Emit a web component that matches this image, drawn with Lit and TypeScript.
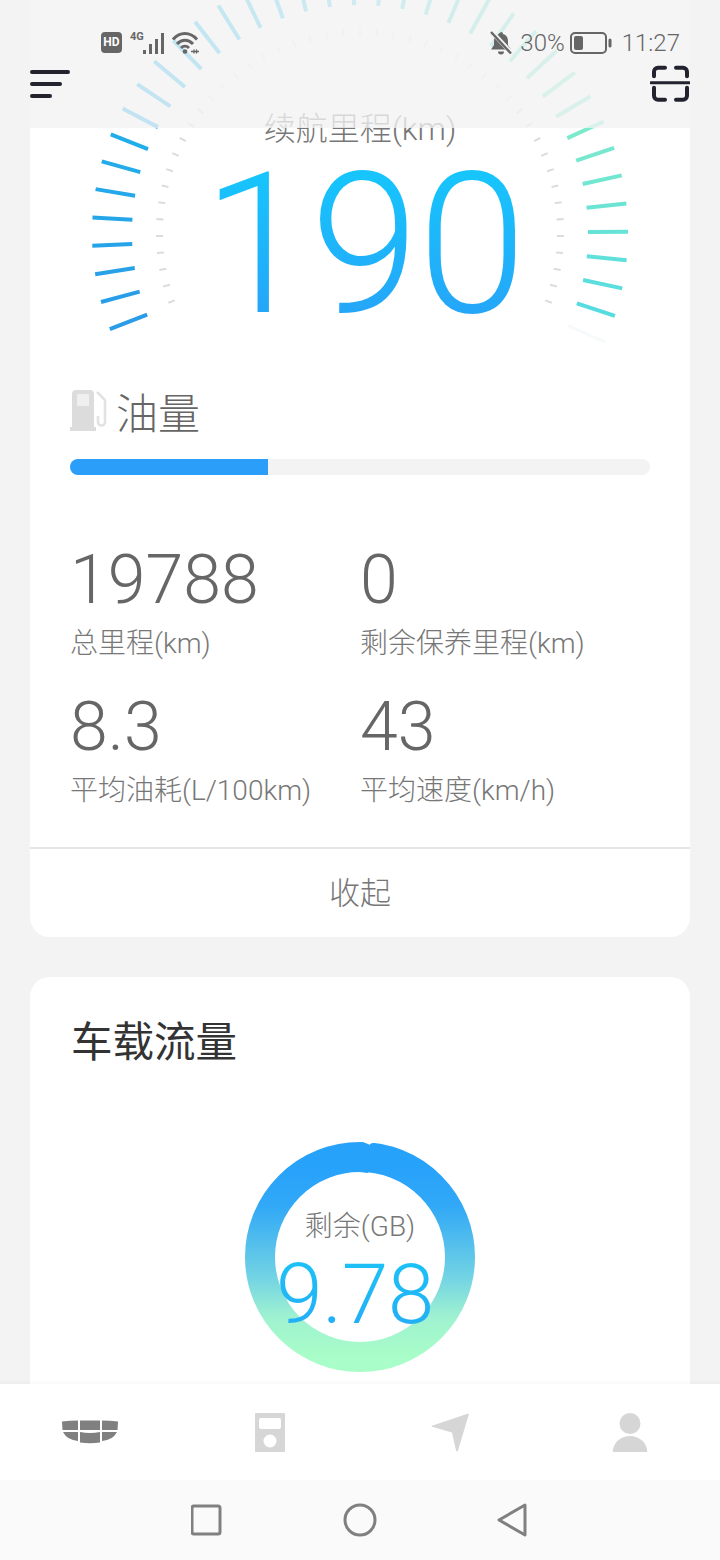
import { LitElement, html, css, svg } from 'lit';
import { customElement, property } from 'lit/decorators.js';

const CX = 330;
const CY = 233;

// clockwise from bottom-left of the gauge to bottom-right
const STOPS: [number, number[]][] = [
  [0, [42, 156, 232]],
  [0.32, [28, 184, 236]],
  [0.5, [80, 208, 226]],
  [0.76, [134, 237, 198]],
  [1, [85, 220, 224]],
];

function tickColor(t: number) {
  for (let i = 1; i < STOPS.length; i++) {
    if (t <= STOPS[i][0]) {
      const [t0, a] = STOPS[i - 1];
      const [t1, b] = STOPS[i];
      const k = (t - t0) / (t1 - t0);
      return `rgb(${a.map((v, j) => Math.round(v + (b[j] - v) * k)).join(',')})`;
    }
  }
  return 'rgb(85,220,224)';
}

function polar(r: number, deg: number) {
  const a = (deg * Math.PI) / 180;
  return [CX + r * Math.cos(a), CY - r * Math.sin(a)];
}

function tick(r0: number, r1: number, deg: number, color: string, w: number) {
  const [x1, y1] = polar(r0, deg);
  const [x2, y2] = polar(r1, deg);
  return svg`<line x1=${x1} y1=${y1} x2=${x2} y2=${y2} stroke=${color} stroke-width=${w} />`;
}

@customElement('range-gauge')
export class RangeGauge extends LitElement {
  @property({ type: String }) label = '';
  @property({ type: String }) value = '';

  static styles = css`
    :host {
      display: grid;
      height: 360px;
    }

    .dial,
    .readout {
      grid-area: 1 / 1;
    }

    .dial {
      width: 660px;
      height: 360px;
      overflow: visible;
    }

    .readout {
      display: flex;
      flex-direction: column;
      align-items: center;
      padding-top: 109px;
    }

    .label {
      font: 300 32px/40px Roboto, 'Noto Sans CJK SC', sans-serif;
      color: #777;
    }

    .value {
      padding-left: 8px;
      font: 300 196px/192px Roboto, sans-serif;
      letter-spacing: -1px;
      background: linear-gradient(180deg, #17c4fc 15%, #25a6f8 85%);
      -webkit-background-clip: text;
      background-clip: text;
      color: transparent;
    }
  `;

  render() {
    const outer = [tick(228, 268, -24, '#f6fafa', 3)];
    for (let k = 0; k <= 36; k++) {
      const deg = -18 + (219 / 36) * k;
      outer.push(tick(228, 268, deg, tickColor(1 - k / 36), 4));
    }
    const inner = [];
    for (let k = 0; k <= 46; k++) {
      const deg = -20 + (220 / 46) * k;
      // the upper part of the scale fades out under the header
      const color = deg > 38 && deg < 142 ? '#ececec' : '#dcdcdc';
      inner.push(tick(197, 204, deg, color, 2));
    }
    return html`
      <svg class="dial" viewBox="0 0 660 360">${inner}${outer}</svg>
      <div class="readout">
        <div class="label">${this.label}</div>
        <div class="value">${this.value}</div>
      </div>
    `;
  }
}

@customElement('data-ring')
export class DataRing extends LitElement {
  static styles = css`
    :host {
      display: grid;
      width: 230px;
      height: 230px;
      justify-items: center;
    }

    svg,
    .text {
      grid-area: 1 / 1;
    }

    svg {
      width: 230px;
      height: 230px;
    }

    .text {
      display: flex;
      flex-direction: column;
      align-items: center;
      padding-top: 67px;
    }

    .label {
      font: 300 28px/36px Roboto, 'Noto Sans CJK SC', sans-serif;
      color: #777;
    }

    .value {
      margin: 8px 10px 0 0;
      font: 300 84px/84px Roboto, sans-serif;
      letter-spacing: -0.5px;
      background: linear-gradient(180deg, #1cc4f6, #24abf6);
      -webkit-background-clip: text;
      background-clip: text;
      color: transparent;
    }
  `;

  render() {
    return html`
      <svg viewBox="0 0 230 230">
        <defs>
          <linearGradient id="ring" x1="0" y1="0" x2="0" y2="1">
            <stop offset="0.05" stop-color="#27a2fb" />
            <stop offset="0.25" stop-color="#32a9f6" />
            <stop offset="0.6" stop-color="#72d3e4" />
            <stop offset="0.8" stop-color="#9ff2d0" />
            <stop offset="1" stop-color="#a8fdc8" />
          </linearGradient>
        </defs>
        <circle cx="115" cy="115" r="100" fill="none" stroke="url(#ring)" stroke-width="30" />
        <path d="M119 -1 L134 -1 L131 0.800 Q126 0.500 124.500 2.800 Q122 1.200 119 0.400 Z" fill="#fff" />
        <path d="M113 30 Q119 29 122 27 L129 27 Q125 30 122 31 Q118 30 113 30 Z" fill="#27a2fb" />
      </svg>
      <div class="text">
        <div class="label">剩余(GB)</div>
        <div class="value">9.78</div>
      </div>
    `;
  }
}

@customElement('app-root')
export class AppRoot extends LitElement {
  static styles = css`
    :host {
      display: block;
      position: relative;
      width: 720px;
      height: 1560px;
      overflow: hidden;
      background: #f3f3f3;
      font-family: Roboto, 'Noto Sans CJK SC', sans-serif;
    }

    /* header floats over the scrolled card */
    .header {
      position: absolute;
      top: 0;
      left: 0;
      right: 0;
      height: 128px;
      background: rgba(242, 242, 244, 0.78);
      display: flex;
      flex-direction: column;
    }

    .status {
      height: 64px;
      display: flex;
      align-items: center;
      padding: 21px 40px 0 101px;
      box-sizing: border-box;
      color: #666;
    }

    .status svg {
      display: block;
    }

    .hd {
      width: 21px;
      height: 21px;
      border-radius: 4px;
      background: #666;
      color: #fff;
      font: 700 12px/21px Roboto, sans-serif;
      text-align: center;
    }

    .net {
      margin-left: 7px;
    }

    .wifi {
      margin-left: 6px;
    }

    .status-right {
      margin-left: auto;
      display: flex;
      align-items: center;
      font: 300 24px/30px Roboto, sans-serif;
      color: #666;
    }

    .pct {
      margin: 0 5px 0 8px;
    }

    .clock {
      margin-left: 10px;
    }

    .actions {
      display: flex;
      justify-content: space-between;
      align-items: flex-start;
      padding: 0 30px;
    }

    .burger {
      display: flex;
      flex-direction: column;
      gap: 8px;
      padding-top: 6px;
    }

    .burger i {
      display: block;
      height: 4px;
      border-radius: 2px;
      background: #23232f;
    }

    .page {
      display: flex;
      flex-direction: column;
      gap: 40px;
      padding: 0 30px;
    }

    .card {
      background: #fff;
      border-radius: 20px;
    }

    .top-card {
      height: 937px;
      box-sizing: border-box;
      border-radius: 0 0 20px 20px;
      display: flex;
      flex-direction: column;
    }

    .fuel {
      padding: 28px 40px 0;
    }

    .fuel-title {
      display: flex;
      align-items: center;
      gap: 8px;
      height: 46px;
      font: 300 42px/46px 'Noto Sans CJK SC', sans-serif;
      color: #666;
    }

    .bar {
      margin-top: 25px;
      height: 16px;
      border-radius: 8px;
      background: #f3f3f3;
      overflow: hidden;
    }

    .bar div {
      height: 100%;
      background: #2a9ef8;
    }

    .stats {
      display: grid;
      grid-template-columns: 290px 1fr;
      padding: 67px 0 0 40px;
      row-gap: 21px;
    }

    .stat {
      height: 126px;
    }

    .num {
      font: 300 68px/76px Roboto, sans-serif;
      color: #666;
      height: 84px;
    }

    .cap {
      font: 300 28px/36px Roboto, 'Noto Sans CJK SC', sans-serif;
      color: #777;
      white-space: nowrap;
    }

    .collapse {
      margin-top: auto;
      height: 90px;
      padding-bottom: 4px;
      box-sizing: border-box;
      border-top: 2px solid #e6e6e6;
      display: flex;
      align-items: center;
      justify-content: center;
      font: 300 31px/40px 'Noto Sans CJK SC', sans-serif;
      color: #777;
    }

    .data-card {
      height: 600px;
      padding: 37px 41px 0;
      box-sizing: border-box;
    }

    .data-title {
      font: 400 41.500px/50px 'Noto Sans CJK SC', sans-serif;
      color: #333;
    }

    .ring-wrap {
      display: flex;
      justify-content: center;
      padding-top: 78px;
    }

    /* bottom bars float over the page */
    .bottom {
      position: absolute;
      left: 0;
      right: 0;
      bottom: 0;
      display: flex;
      flex-direction: column;
    }

    .tabs {
      height: 96px;
      background: #fff;
      display: grid;
      grid-template-columns: repeat(4, 180px);
      place-items: center;
      box-shadow: 0 -3px 4px rgba(0, 0, 0, 0.025);
    }

    .tabs svg {
      display: block;
    }

    .nav {
      height: 80px;
      background: #fafafa;
      display: flex;
      justify-content: center;
      align-items: center;
      gap: 120px;
      padding-right: 3px;
    }
  `;

  private stat(value: string, label: string) {
    return html`
      <div class="stat">
        <div class="num">${value}</div>
        <div class="cap">${label}</div>
      </div>
    `;
  }

  render() {
    return html`
      <div class="page">
        <section class="card top-card">
          <range-gauge label="续航里程(km)" value="190"></range-gauge>
          <div class="fuel">
            <div class="fuel-title">
              <svg width="38" height="44" viewBox="0 0 38 44">
                <path d="M2 5a4 4 0 0 1 4-4h14a4 4 0 0 1 4 4v33H2Z M7 5v12h12V5Z" fill="#dcdcdc" fill-rule="evenodd" />
                <path d="M7 5h12v12H7Z" fill="#efefef" />
                <rect x="0" y="38" width="26" height="4" fill="#dcdcdc" />
                <path d="M27 3l7 7a3 3 0 0 1 1 2v21a3.500 3.500 0 0 1-7 0v-6" fill="none" stroke="#e2e2e2" stroke-width="2.600" />
              </svg>
              油量
            </div>
            <div class="bar"><div style="width: ${(198 / 580) * 100}%"></div></div>
          </div>
          <div class="stats">
            ${this.stat('19788', '总里程(km)')}
            ${this.stat('0', '剩余保养里程(km)')}
            ${this.stat('8.3', '平均油耗(L/100km)')}
            ${this.stat('43', '平均速度(km/h)')}
          </div>
          <div class="collapse">收起</div>
        </section>
        <section class="card data-card">
          <div class="data-title">车载流量</div>
          <div class="ring-wrap"><data-ring></data-ring></div>
        </section>
      </div>

      <header class="header">
        <div class="status">
          <div class="hd">HD</div>
          <svg class="net" width="37" height="24" viewBox="0 0 37 24" fill="#666">
            <text x="1" y="9" font-family="Roboto, sans-serif" font-size="11" font-weight="700">4G</text>
            <rect x="14" y="19" width="3" height="4" />
            <rect x="20" y="13" width="3" height="10" />
            <rect x="26" y="8" width="3" height="15" />
            <rect x="32" y="2" width="3" height="21" />
          </svg>
          <svg class="wifi" width="28" height="24" viewBox="0 0 28 24" fill="none" stroke="#666" stroke-width="3">
            <path d="M1 8.500c7-8 17-8 24 0" />
            <path d="M5 13c5-5 11-5 16 0" />
            <path d="M9 17c2.500-2.500 5.500-2.500 8 0" />
            <circle cx="13" cy="20.500" r="2.300" fill="#666" stroke="none" />
            <path d="M19 20.500h8M22 18.500v4M24.500 18.500v4" stroke-width="1.300" />
          </svg>
          <div class="status-right">
            <svg width="22" height="24" viewBox="0 0 22 24" fill="#666">
              <path d="M11 1a2 2 0 0 1 2 2c3.500 1 5 4 5 7v4l3 4.500H1l3-4.500v-4c0-1.500.4-3 1.200-4.300Z" />
              <path d="M8 20.500h6a3 3 0 0 1-6 0Z" />
              <path d="M1 0l20 21.500" stroke="#f4f4f6" stroke-width="4.500" />
              <path d="M1 1l20 21.500" stroke="#666" stroke-width="2.400" />
            </svg>
            <span class="pct">30%</span>
            <svg width="42" height="22" viewBox="0 0 42 22">
              <rect x="1" y="1" width="35" height="20" rx="4" fill="none" stroke="#666" stroke-width="2" />
              <rect x="4" y="4" width="9" height="14" rx="2" fill="#666" />
              <rect x="38.500" y="6.500" width="3" height="9" rx="1.500" fill="#666" />
            </svg>
            <span class="clock">11:27</span>
          </div>
        </div>
        <div class="actions">
          <div class="burger">
            <i style="width: 40px"></i>
            <i style="width: 32px"></i>
            <i style="width: 22px"></i>
          </div>
          <svg width="40" height="38" viewBox="0 0 40 38" fill="none" stroke="#23232f" stroke-width="4" stroke-linecap="round">
            <path d="M15 3.700H8a4 4 0 0 0-4 4v4.500" />
            <path d="M26 3.700h7a4 4 0 0 1 4 4v4.500" />
            <path d="M15 35.700H8a4 4 0 0 1-4-4v-8" />
            <path d="M26 35.700h7a4 4 0 0 0 4-4v-8" />
            <path d="M1 18.700h38" stroke-width="3" />
          </svg>
        </div>
      </header>

      <footer class="bottom">
        <div class="tabs">
          <svg width="56" height="24" viewBox="0 0 56 24" fill="#808080">
            <path d="M0 1.500Q8 0.500 16 0.500V10H0.500Z" />
            <path d="M18 0.500H38V10H18Z" />
            <path d="M40 0.500Q48 0.500 56 1.500L55.500 10H40Z" />
            <path d="M1 12H16V21Q5 20 1 12Z" />
            <path d="M18 12Q28 14 38 12V22.500Q28 24 18 22.500Z" />
            <path d="M40 12H55Q51 20 40 21Z" />
          </svg>
          <svg width="30" height="39" viewBox="0 0 30 39" fill-rule="evenodd">
            <path d="M1 0H29a1 1 0 0 1 1 1V38a1 1 0 0 1-1 1H1a1 1 0 0 1-1-1V1a1 1 0 0 1 1-1Z M6 5a2 2 0 0 0-2 2V14a2 2 0 0 0 2 2H24a2 2 0 0 0 2-2V7a2 2 0 0 0-2-2Z M15 21.500a6.500 6.500 0 1 0 0 13a6.500 6.500 0 1 0 0-13Z" fill="#d6d6d6" />
          </svg>
          <svg width="38" height="39" viewBox="0 0 38 39">
            <path d="M36.500 0.800Q38 0.300 37.700 1.800L27 37.500Q26 39.300 25 37.500L21 19.500L1 13.800Q0 13.300 1 12.800Z" fill="#d6d6d6" />
          </svg>
          <svg width="36" height="39" viewBox="0 0 36 39" fill="#d6d6d6">
            <circle cx="18" cy="10.500" r="10.500" />
            <path d="M1 39Q0.500 39 1 36C3 28 10 23 18 23S33 28 35 36Q35.500 39 35 39Z" />
          </svg>
        </div>
        <div class="nav">
          <svg width="32" height="32" viewBox="0 0 32 32"><rect x="1" y="2" width="28" height="28" rx="2" fill="none" stroke="#808080" stroke-width="3" /></svg>
          <svg width="34" height="34" viewBox="0 0 34 34"><circle cx="17" cy="17" r="15" fill="none" stroke="#808080" stroke-width="3" /></svg>
          <svg width="30" height="34" viewBox="0 0 30 34"><path d="M28 2L2 17L28 32Z" fill="none" stroke="#808080" stroke-width="3" stroke-linejoin="round" /></svg>
        </div>
      </footer>
    `;
  }
}
